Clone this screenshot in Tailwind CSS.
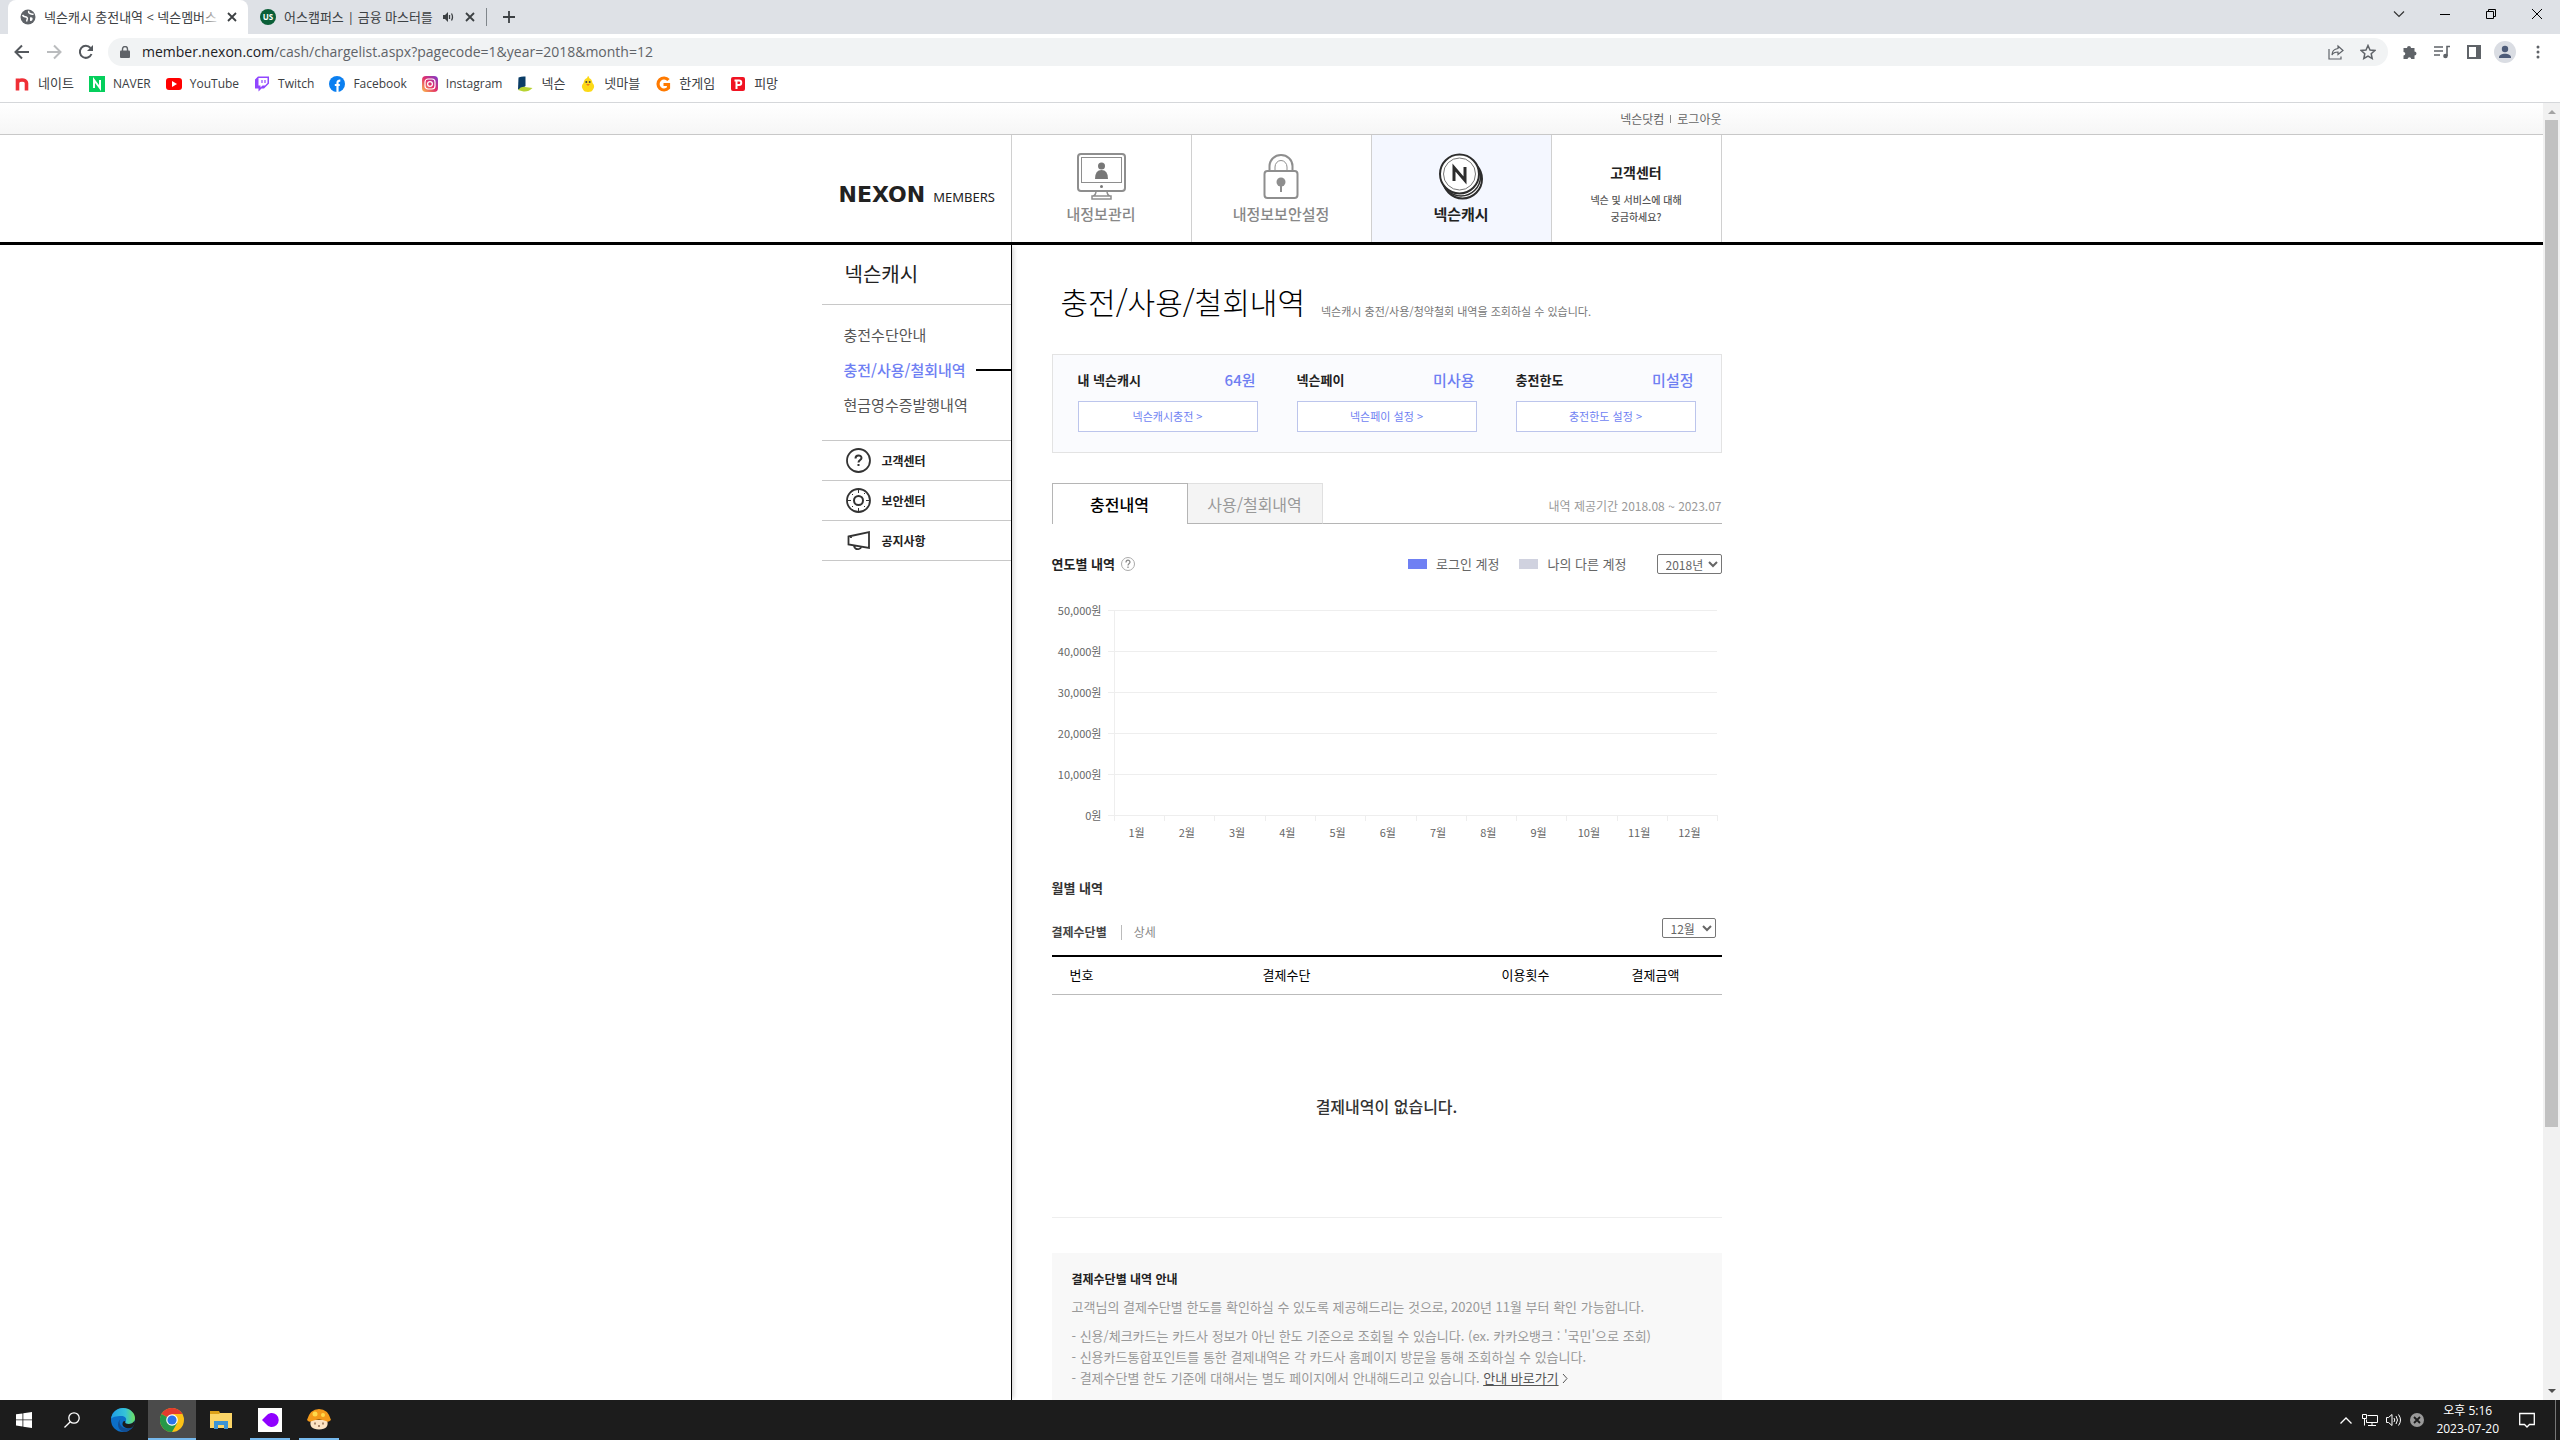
<!DOCTYPE html>
<html lang="ko">
<head>
<meta charset="utf-8">
<title>넥슨캐시 충전내역 &lt; 넥슨멤버스</title>
<script src="https://cdn.jsdelivr.net/npm/@tailwindcss/browser@4"></script>
</head>
<body class="flex h-screen flex-col overflow-hidden bg-white font-['Noto_Sans_CJK_KR',sans-serif] text-[13px] leading-[20px] text-[#333]">

<!-- Browser chrome -->
<div class="shrink-0 border-b border-[#d5d7da] font-['Open_Sans','Noto_Sans_CJK_KR',sans-serif] text-[#3c4043]">
  <div class="flex h-[34px] items-stretch bg-[#dee1e6]">
    <div class="ml-2 flex w-[240px] items-center rounded-t-lg bg-white pr-2 pl-3">
      <svg class="size-4 shrink-0" viewBox="0 0 16 16"><circle cx="8" cy="8" r="7.5" fill="#5f6368"/><path d="M2.500 6c1.500 2.500 3 1 4.500 2.500s-1 2 0 4M9 2c-1 1.500 0 2 1 2.500s2 1 3.500.5" fill="none" stroke="#fff" stroke-width="1.500"/><path d="M10 8.500c2-.5 3 .5 2.500 2s-2 2-2.500 1z" fill="#fff"/></svg>
      <div class="relative ml-2 min-w-0 flex-1 whitespace-nowrap">넥슨캐시 충전내역 &lt; 넥슨멤버스<span class="absolute inset-y-0 right-0 w-5 bg-linear-to-r from-transparent to-white"></span></div>
      <button class="ml-1 flex size-4 shrink-0 items-center justify-center" aria-label="탭 닫기"><svg class="size-[10px]" viewBox="0 0 10 10"><path d="M1 1l8 8M9 1l-8 8" stroke="#3c4043" stroke-width="1.800"/></svg></button>
    </div>
    <div class="my-2 flex w-[239px] items-center border-r border-[#80868b] pr-2 pl-3">
      <span class="flex size-4 shrink-0 items-center justify-center rounded-full bg-[#0b5f38] text-[8px] font-bold text-white">US</span>
      <div class="ml-2 min-w-0 flex-1 whitespace-nowrap">어스캠퍼스 | 금융 마스터를</div>
      <svg class="ml-3 size-3 shrink-0" viewBox="0 0 12 12"><path d="M1 4h2l3-3v10L3 8H1z" fill="#3c4043"/><path d="M7.500 4v4M9.500 2.500q2 3.500 0 7" stroke="#3c4043" fill="none" stroke-width="1.300"/></svg>
      <button class="ml-2 flex size-4 shrink-0 items-center justify-center" aria-label="탭 닫기"><svg class="size-[10px]" viewBox="0 0 10 10"><path d="M1 1l8 8M9 1l-8 8" stroke="#3c4043" stroke-width="1.800"/></svg></button>
    </div>
    <button class="ml-4 flex items-center" aria-label="새 탭"><svg class="size-3" viewBox="0 0 12 12"><path d="M6 0v12M0 6h12" stroke="#3c4043" stroke-width="1.800"/></svg></button>
    <div class="ml-auto flex items-center pb-1.5 text-black">
      <button class="flex w-[46px] justify-center" aria-label="탭 검색"><svg class="h-[7px] w-3" viewBox="0 0 12 7"><path d="M1 .5l5 5 5-5" stroke="#333" stroke-width="1.200" fill="none"/></svg></button>
      <button class="flex w-[46px] justify-center" aria-label="최소화"><svg class="size-[10px]" viewBox="0 0 10 10"><path d="M0 5.500h10" stroke="#000"/></svg></button>
      <button class="flex w-[46px] justify-center" aria-label="이전 크기로"><svg class="size-[10px]" viewBox="0 0 10 10"><path d="M.5 2.500h7v7h-7zM2.500 2.500v-2h7v7h-2" stroke="#000" fill="none"/></svg></button>
      <button class="flex w-[46px] justify-center" aria-label="닫기"><svg class="size-[10px]" viewBox="0 0 10 10"><path d="M0 0l10 10M10 0L0 10" stroke="#000"/></svg></button>
    </div>
  </div>

  <div class="flex h-9 items-center bg-white pr-5 pl-3.5">
    <button aria-label="뒤로"><svg class="size-4" viewBox="0 0 16 16"><path d="M15 8H2M8 1.500L1.500 8 8 14.500" stroke="#54585d" stroke-width="2" fill="none"/></svg></button>
    <button class="ml-4" aria-label="앞으로"><svg class="size-4" viewBox="0 0 16 16"><path d="M1 8h13M8 1.500L14.500 8 8 14.500" stroke="#babcbe" stroke-width="2" fill="none"/></svg></button>
    <button class="ml-4" aria-label="새로고침"><svg class="size-4" viewBox="0 0 16 16"><path d="M13.500 10A6 6 0 1 1 12.500 4" stroke="#54585d" stroke-width="2" fill="none"/><path d="M15 1v6H9z" fill="#54585d"/></svg></button>
    <div class="ml-3.5 flex h-7 flex-1 items-center rounded-full bg-[#f1f3f4] pr-3 pl-3">
      <svg class="h-3 w-[10px]" viewBox="0 0 10 12"><rect y="4.500" width="10" height="7.500" rx="1" fill="#5f6368"/><path d="M2.500 5V3a2.500 2.500 0 0 1 5 0v2" stroke="#5f6368" stroke-width="1.400" fill="none"/></svg>
      <div class="ml-3 text-sm text-[#5f6368]"><span class="text-[#202124]">member.nexon.com</span>/cash/chargelist.aspx?pagecode=1&amp;year=2018&amp;month=12</div>
      <button class="ml-auto" aria-label="공유"><svg class="size-4" viewBox="0 0 16 16"><path d="M1 5v10h12v-2.500M10 2l5 4.500-5 4V8C7 8 5 9 4 11c0-4 2.500-6 6-6.500z" stroke="#5f6368" stroke-width="1.200" fill="none"/></svg></button>
      <button class="ml-4" aria-label="북마크"><svg class="size-4" viewBox="0 0 16 16"><path d="M8 1.500l2 4.500 4.800.5-3.600 3.200 1 4.800L8 12l-4.200 2.500 1-4.800L1.200 6.500 6 6z" stroke="#5f6368" stroke-width="1.500" fill="none"/></svg></button>
    </div>
    <button class="ml-3.5" aria-label="확장 프로그램"><svg class="size-4" viewBox="0 0 16 16"><path d="M1.500 4H5a2 2 0 1 1 4 0h3.500v3.500a2 2 0 1 1 0 4V15H9.200a1.800 1.800 0 0 0-3.600 0H1.500v-3.500a1.800 1.800 0 0 0 0-3.600z" fill="#5f6368"/></svg></button>
    <button class="ml-4" aria-label="미디어"><svg class="size-4" viewBox="0 0 16 16"><path d="M0 3h9M0 7h9M0 11h6M13 12V2.500h3" stroke="#5f6368" stroke-width="1.600" fill="none"/><circle cx="11.500" cy="12" r="2.300" fill="#5f6368"/></svg></button>
    <button class="ml-4" aria-label="사이드 패널"><svg class="size-4" viewBox="0 0 16 16"><rect x="2" y="2" width="12" height="12" fill="none" stroke="#5f6368" stroke-width="2"/><path d="M10 2h4v12h-4z" fill="#5f6368"/></svg></button>
    <button class="ml-3" aria-label="프로필"><svg class="size-[22px]" viewBox="0 0 22 22"><circle cx="11" cy="11" r="11" fill="#dadde3"/><circle cx="11" cy="8" r="3.200" fill="#4d5b78"/><path d="M5 16.500c0-5 12-5 12 0v.5H5z" fill="#4d5b78"/></svg></button>
    <button class="ml-5" aria-label="메뉴"><svg class="h-4 w-1" viewBox="0 0 4 16"><circle cx="2" cy="3" r="1.500" fill="#5f6368"/><circle cx="2" cy="8" r="1.500" fill="#5f6368"/><circle cx="2" cy="13" r="1.500" fill="#5f6368"/></svg></button>
  </div>

  <nav class="flex h-8 items-center gap-[15px] bg-white pb-1 pl-3.5 text-xs">
    <a href="#" class="flex items-center gap-2 text-[13px]"><svg class="size-4" viewBox="0 0 16 16"><path d="M3.500 14.500V2.500M3.500 7c0-4 9-4 9 0v7.500" stroke="#ef2f36" stroke-width="3.600" fill="none"/></svg>네이트</a>
    <a href="#" class="flex items-center gap-2"><svg class="size-4" viewBox="0 0 16 16"><rect width="16" height="16" fill="#05cf5c"/><path d="M5 12V4l6 8V4" stroke="#fff" stroke-width="2" fill="none"/></svg>NAVER</a>
    <a href="#" class="flex items-center gap-2"><svg class="size-4" viewBox="0 0 16 16"><rect y="2" width="16" height="12" rx="3" fill="#f00"/><path d="M6 5l5 3-5 3z" fill="#fff"/></svg>YouTube</a>
    <a href="#" class="flex items-center gap-2"><svg class="size-4" viewBox="0 0 16 16"><path d="M4 .5L1 3.500v9h3.500v3L7.500 12.500H10l5-5v-7z" fill="#9146ff"/><path d="M4.500 2h9v5L11 9.500H8.500l-2 2v-2h-2z" fill="#fff"/><path d="M8 4v3M11 4v3" stroke="#9146ff" stroke-width="1.200"/></svg>Twitch</a>
    <a href="#" class="flex items-center gap-2"><svg class="size-4" viewBox="0 0 16 16"><circle cx="8" cy="8" r="8" fill="#0b7ff0"/><path d="M8.500 16V7q0-2.500 2.800-2.300M5.800 9h5" stroke="#fff" stroke-width="2.200" fill="none"/></svg>Facebook</a>
    <a href="#" class="flex items-center gap-2"><svg class="size-4" viewBox="0 0 16 16"><defs><linearGradient id="ig" x1="0" y1="1" x2="1" y2="0"><stop stop-color="#fdc04d"/><stop offset=".5" stop-color="#e1306c"/><stop offset="1" stop-color="#7a3bd0"/></linearGradient></defs><rect width="16" height="16" rx="4" fill="url(#ig)"/><rect x="3" y="3" width="10" height="10" rx="3" stroke="#fff" stroke-width="1.200" fill="none"/><circle cx="8" cy="8" r="2.400" stroke="#fff" stroke-width="1.200" fill="none"/></svg>Instagram</a>
    <a href="#" class="flex items-center gap-2 text-[13px]"><svg class="size-4" viewBox="0 0 16 16"><path d="M1.500 1.500Q5 0 8.500.5V10l-5 3.500H1z" fill="#0a3c66"/><path d="M1 14q3-4 7-3l7.500 1q-4 4-9 3.500z" fill="#b7d331"/></svg>넥슨</a>
    <a href="#" class="flex items-center gap-2 text-[13px]"><svg class="size-4" viewBox="0 0 16 16"><path d="M8 0q2 1 1 2 3 1 3.500 5 3 3 .5 6.500-1 2.500-5 2.500t-5-2.500Q.5 10 3.500 7 4 3 7 2z" fill="#fcd916"/><circle cx="6.300" cy="6" r="1" fill="#444"/><circle cx="9.700" cy="6" r="1" fill="#444"/><path d="M6 8h4l-2 2z" fill="#ee7a1b"/></svg>넷마블</a>
    <a href="#" class="flex items-center gap-2 text-[13px]"><svg class="size-4" viewBox="0 0 16 16"><path d="M13.500 4A6 6 0 1 0 13.500 12V8.500H8.500" stroke="#ff7a00" stroke-width="3.200" fill="none"/></svg>한게임</a>
    <a href="#" class="flex items-center gap-2 text-[13px]"><svg class="size-4" viewBox="0 0 16 16"><rect x="1" y="1" width="14" height="14" rx="2" fill="#f01423"/><path d="M6.500 13V4.500M4.500 4.500H9a2 2 0 0 1 0 4.500H6.500" stroke="#fff" stroke-width="2" fill="none"/></svg>피망</a>
  </nav>
</div>

<!-- Page viewport -->
<div class="flex min-h-0 flex-1">
  <div class="flex min-w-0 flex-1 flex-col overflow-hidden">
    <div class="h-8 shrink-0 border-b border-[#c8c8c8] bg-linear-to-b from-white to-[#f6f6f6]">
      <div class="mx-auto flex w-[900px] items-center justify-end gap-1.5 pt-1.5 text-[12px] text-[#666]">
        <a href="#">넥슨닷컴</a><span class="h-2 w-px bg-[#888]"></span><a href="#">로그아웃</a>
      </div>
    </div>

    <header class="shrink-0 border-b-3 border-black">
      <div class="mx-auto flex h-[107px] w-[900px]">
        <a href="#" class="flex w-[189px] items-baseline gap-2 pt-[49px] pl-[17px] leading-[22px] text-[#222]"><span class="font-['DejaVu_Sans',sans-serif] text-[22px] font-bold">NEXON</span><span class="font-['Noto_Sans',sans-serif] text-[13px]">MEMBERS</span></a>
        <nav class="flex flex-1 text-center text-[15px] font-medium text-[#888]">
          <a href="#" class="flex w-[180px] flex-col items-center border-l border-[#d0d0d0] pt-[18px]">
            <svg class="h-[47px] w-[49px]" viewBox="0 0 49 47" fill="none" stroke="#8e8e8e"><rect x="1" y="1" width="47" height="37" rx="3" stroke-width="2"/><rect x="4.500" y="4.500" width="40" height="25"/><circle cx="24.500" cy="13" r="3.500" fill="#777" stroke="none"/><path d="M18 26q0-9 6.500-9t6.500 9z" fill="#777" stroke="none"/><circle cx="24.500" cy="33.500" r="1.500" fill="#777" stroke="none"/><path d="M19 38q0 4-3 5M30 38q0 4 3 5M15 43h19v3H15z" stroke-width="1.500"/></svg>
            <span class="mt-1">내정보관리</span></a>
          <a href="#" class="flex w-[180px] flex-col items-center border-l border-[#d0d0d0] pt-[18px]">
            <svg class="h-[47px] w-[36px]" viewBox="0 0 36 47" fill="none" stroke="#8e8e8e"><rect x="1.500" y="18" width="33" height="27" rx="3" stroke-width="2"/><path d="M6.500 18v-5a11.500 11 0 0 1 23 0v5" stroke-width="2"/><path d="M12 18v-4a6 6.500 0 0 1 12 0v4"/><circle cx="18" cy="29" r="4.500" fill="#8e8e8e" stroke="none"/><path d="M18 30v9" stroke-width="2"/></svg>
            <span class="mt-1">내정보보안설정</span></a>
          <a href="#" class="flex w-[180px] flex-col items-center border-l border-[#d0d0d0] bg-[#f4f7ff] pt-[18px] font-bold text-[#222]">
            <svg class="h-[47px] w-[46px]" viewBox="0 0 46 47" fill="none" stroke="#2d2d2d"><circle cx="24.500" cy="26" r="19.500" fill="#fff" stroke-width="2"/><circle cx="23" cy="23.500" r="19.500" fill="#fff" stroke-width="1.500"/><circle cx="21.500" cy="21" r="19.500" fill="#fff" stroke-width="2"/><circle cx="21.500" cy="21" r="16" stroke="#777"/><path d="M16 28V14.500l11 13V14" stroke-width="3"/></svg>
            <span class="mt-1">넥슨캐시</span></a>
          <a href="#" class="flex flex-1 flex-col items-center border-x border-[#d0d0d0] pt-[27px]"><strong class="text-[14px] text-[#222]">고객센터</strong><span class="mt-[9px] text-[10px] leading-[17px] text-[#555]">넥슨 및 서비스에 대해<br>궁금하세요?</span></a>
        </nav>
      </div>
    </header>

    <div class="mx-auto flex min-h-0 w-[900px] flex-1">
      <aside class="w-[190px] shrink-0 border-r border-black shadow-[4px_0_4px_-2px_rgba(0,0,0,0.15)]">
        <h2 class="border-b border-[#c8c8c8] pt-[14px] pb-[15px] pl-[23px] text-xl leading-[30px] text-[#222]">넥슨캐시</h2>
        <ul class="pt-3 pb-[18px] pl-[22px] text-[15px] leading-[35px] text-[#555]">
          <li><a href="#">충전수단안내</a></li>
          <li class="flex items-center gap-2.5"><a href="#" class="font-medium text-[#6f80f3]">충전/사용/철회내역</a><span class="h-0.5 flex-1 bg-black"></span></li>
          <li><a href="#">현금영수증발행내역</a></li>
        </ul>
        <ul class="border-t border-[#c8c8c8] text-xs font-bold text-[#222]">
          <li class="border-b border-[#c8c8c8]"><a href="#" class="flex h-[39px] items-center gap-[11px] pl-6"><svg class="size-[25px]" viewBox="0 0 25 25" fill="none" stroke="#333" stroke-width="1.800"><circle cx="12.500" cy="12.500" r="11.500"/><path d="M9.500 10.500c0-4 6-4 6-.5 0 2-3 2-3 4.500M12.500 16v2" stroke-width="2"/></svg>고객센터</a></li>
          <li class="border-b border-[#c8c8c8]"><a href="#" class="flex h-[39px] items-center gap-[11px] pl-6"><svg class="size-[25px]" viewBox="0 0 25 25" fill="none" stroke="#333" stroke-width="1.800"><circle cx="12.500" cy="12.500" r="11.500"/><circle cx="12.500" cy="12.500" r="4.500" stroke-width="2"/><path d="M12.500 1v4M12.500 20v4M1 12.500h4M20 12.500h4M6 6l1 1M18 6l1-1M6 19l1-1M18 18l1 1" stroke-width="1"/></svg>보안센터</a></li>
          <li class="border-b border-[#c8c8c8]"><a href="#" class="flex h-[39px] items-center gap-[11px] pl-6"><svg class="size-[25px]" viewBox="0 0 25 25" fill="none" stroke="#333" stroke-width="1.800"><path d="M2.500 8.500L23 4v16L2.500 16.500zM8 18q1 4 5 3 2-.5 2-2M5 8v2"/></svg>공지사항</a></li>
        </ul>
      </aside>

      <main class="flex-1 pl-10">
        <div class="flex items-end pt-[34px] pl-[9px]">
          <h1 class="text-[30px] leading-[44px] font-light text-black">충전/사용/철회내역</h1>
          <p class="mb-0.5 ml-4 text-[11px] text-[#777]">넥슨캐시 충전/사용/청약철회 내역을 조회하실 수 있습니다.</p>
        </div>

        <section class="mt-[31px] grid h-[99px] grid-cols-3 gap-[39px] border border-[#e3e3e3] bg-[#fafbfe] px-[25px] pt-[15px]">
          <div>
            <div class="flex justify-between"><strong class="text-[#222]">내 넥슨캐시</strong><span class="pr-0.5 text-[15px] font-medium text-[#6f7ff2]">64원</span></div>
            <button class="mt-[11px] h-[31px] w-full border border-[#bcc5ec] bg-white pb-0.5 text-[11px] text-[#6f7ff2]">넥슨캐시충전 &gt;</button>
          </div>
          <div>
            <div class="flex justify-between"><strong class="text-[#222]">넥슨페이</strong><span class="pr-0.5 text-[15px] font-medium text-[#6f7ff2]">미사용</span></div>
            <button class="mt-[11px] h-[31px] w-full border border-[#bcc5ec] bg-white pb-0.5 text-[11px] text-[#6f7ff2]">넥슨페이 설정 &gt;</button>
          </div>
          <div>
            <div class="flex justify-between"><strong class="text-[#222]">충전한도</strong><span class="pr-0.5 text-[15px] font-medium text-[#6f7ff2]">미설정</span></div>
            <button class="mt-[11px] h-[31px] w-full border border-[#bcc5ec] bg-white pb-0.5 text-[11px] text-[#6f7ff2]">충전한도 설정 &gt;</button>
          </div>
        </section>

        <div class="mt-[30px] flex h-[41px]">
          <button class="w-[136px] border border-b-0 border-[#b5b5b5] text-base font-medium text-black">충전내역</button>
          <button class="w-[135px] border-t border-r border-b border-t-[#e0e0e0] border-r-[#e0e0e0] border-b-[#b5b5b5] bg-[#f4f4f4] text-base text-[#999]">사용/철회내역</button>
          <p class="flex-1 border-b border-[#b5b5b5] pt-[13px] text-right text-xs leading-[20px] text-[#999]">내역 제공기간 2018.08 ~ 2023.07</p>
        </div>

        <div class="mt-[30px] flex h-5 items-center text-[#666]">
          <h3 class="font-bold text-[#222]">연도별 내역</h3>
          <svg class="ml-1.5 size-[14px]" viewBox="0 0 14 14" fill="none" stroke="#aaa"><circle cx="7" cy="7" r="6.500"/><path d="M5 5.500c0-3 4-3 4-.3C9 6.500 7 6.500 7 8.500M7 9.500v1.500" stroke="#888" stroke-width="1.200"/></svg>
          <span class="ml-auto h-[10px] w-[19px] bg-[#6f80f3]"></span><span class="ml-[9px]">로그인 계정</span>
          <span class="ml-5 h-[10px] w-[19px] bg-[#d0d2df]"></span><span class="ml-[9px]">나의 다른 계정</span>
          <select aria-label="연도" class="ml-[30px] h-5 w-[65px] rounded-[2px] border border-[#767676] bg-white pl-1 text-xs leading-[16px]"><option>2018년</option></select>
        </div>

        <div class="mt-[26px] flex">
          <div class="flex w-[50px] flex-col gap-[21px] text-right text-[11px] text-[#666]"><span>50,000원</span><span>40,000원</span><span>30,000원</span><span>20,000원</span><span>10,000원</span><span>0원</span></div>
          <div class="mt-[10px] ml-1.5 w-[610px]">
            <svg class="block h-[212px] w-full" viewBox="0 0 610 212" stroke="#eee" shape-rendering="crispEdges"><path d="M0 .5h609M0 41.500h609M0 82.500h609M0 123.500h609M0 164.500h609M0 205.500h610"/><path d="M6.500 0v211M56.500 206v5M106.500 206v5M157.500 206v5M207.500 206v5M257.500 206v5M308.500 206v5M358.500 206v5M408.500 206v5M458.500 206v5M509.500 206v5M559.500 206v5M609.500 206v5"/></svg>
            <div class="grid grid-cols-12 pr-[3px] pl-1 text-center text-[11px] text-[#666]"><span>1월</span><span>2월</span><span>3월</span><span>4월</span><span>5월</span><span>6월</span><span>7월</span><span>8월</span><span>9월</span><span>10월</span><span>11월</span><span>12월</span></div>
          </div>
        </div>

        <h3 class="mt-9 font-bold text-[#333]">월별 내역</h3>
        <div class="mt-5 flex h-[37px] items-start text-xs leading-[20px]">
          <a href="#" class="mt-1 font-bold text-[#444]">결제수단별</a><span class="mt-[7px] ml-3.5 h-[15px] w-px bg-[#bbb]"></span><a href="#" class="mt-1 ml-3 text-[#888]">상세</a>
          <select aria-label="월" class="mr-1.5 ml-auto h-5 w-[54px] rounded-[2px] border border-[#767676] bg-white pl-1 text-xs leading-[16px] text-[#666]"><option>12월</option></select>
        </div>
        <table class="w-full table-fixed text-center">
          <thead class="border-t-2 border-b border-t-black border-b-[#bbb] text-[13px] text-black"><tr class="h-[38px]"><th class="w-[60px] font-normal">번호</th><th class="font-normal">결제수단</th><th class="w-[128px] font-normal">이용횟수</th><th class="w-[132px] font-normal">결제금액</th></tr></thead>
          <tbody><tr class="h-[223px] border-b border-[#eee]"><td colspan="4" class="text-base font-medium text-[#333]">결제내역이 없습니다.</td></tr></tbody>
        </table>

        <section class="mt-[35px] bg-[#f8f8f8] px-5 pt-4 pb-10 text-[#999]">
          <h4 class="text-xs leading-[20px] font-bold text-[#222]">결제수단별 내역 안내</h4>
          <p class="mt-2">고객님의 결제수단별 한도를 확인하실 수 있도록 제공해드리는 것으로, 2020년 11월 부터 확인 가능합니다.</p>
          <ul class="mt-2 leading-[21px]">
            <li>- 신용/체크카드는 카드사 정보가 아닌 한도 기준으로 조회될 수 있습니다. (ex. 카카오뱅크 : '국민'으로 조회)</li>
            <li>- 신용카드통합포인트를 통한 결제내역은 각 카드사 홈페이지 방문을 통해 조회하실 수 있습니다.</li>
            <li>- 결제수단별 한도 기준에 대해서는 별도 페이지에서 안내해드리고 있습니다. <a href="#" class="text-[#555]"><span class="underline underline-offset-2">안내 바로가기</span> <svg class="inline h-[9px] w-[6px]" viewBox="0 0 6 9"><path d="M1 0l4 4.500L1 9" stroke="#555" fill="none"/></svg></a></li>
          </ul>
        </section>
      </main>
    </div>
  </div>

  <!-- Scrollbar -->
  <div class="flex w-[17px] shrink-0 flex-col items-center bg-[#f1f1f1]">
    <svg class="h-[17px] w-[17px] shrink-0" viewBox="0 0 17 17"><path d="M5 11h8L9 7z" fill="#a3a3a3"/></svg>
    <div class="w-[13px] flex-[1007] bg-[#c1c1c1]"></div>
    <div class="flex-[256]"></div>
    <svg class="h-[17px] w-[17px] shrink-0" viewBox="0 0 17 17"><path d="M5 6h8l-4 4z" fill="#505050"/></svg>
  </div>
</div>

<!-- Taskbar -->
<footer class="flex h-10 shrink-0 items-stretch bg-[#1c1c1c] text-xs text-white">
  <button class="flex w-12 items-center justify-center" aria-label="시작"><svg class="size-4" viewBox="0 0 16 16" fill="#fff"><path d="M0 2.300l6.500-.9v6.100H0zM7.300 1.300L16 0v7.500H7.300zM0 8.300h6.500v6.200L0 13.600zM7.300 8.300H16V16l-8.700-1.300z"/></svg></button>
  <button class="flex w-12 items-center justify-center" aria-label="검색"><svg class="size-4" viewBox="0 0 16 16" stroke="#fff" stroke-width="1.300" fill="none"><circle cx="10" cy="6" r="5.200"/><path d="M6.300 9.700L.5 15.500"/></svg></button>
  <button class="ml-0.5 flex w-[50px] items-center justify-center" aria-label="Edge"><svg class="size-6" viewBox="0 0 24 24"><defs><linearGradient id="eg" x1="0" x2="1"><stop stop-color="#1f9de6"/><stop offset=".6" stop-color="#35c3d8"/><stop offset="1" stop-color="#6fe05c"/></linearGradient></defs><circle cx="12" cy="12" r="12" fill="#0c6fc8"/><path d="M0 11C1 4 6 0 12 0c7 0 12 5 12 10 0 4-3 6-6.500 6-3 0-4-1.500-3-2.500 2-3-.5-5.500-4-5.500C5 8 1 9 0 11z" fill="url(#eg)"/><path d="M9.500 11c-3 5 2 10 7 9.500 3 0 5-2 5.500-2.500-2 4-6 6-9 6-6-1-8-9-3.500-13z" fill="#124e94"/><path d="M14.500 13.500c-1 1 0 2.500 3 2.500 2.500 0 5-1 6-3.500l.5 3.500-3 3.500c-4 2-10 0-9.500-4 .2-1.500 1.500-3.500 3-2z" fill="#1c1c1c"/></svg></button>
  <button class="flex w-12 items-center justify-center border-b-2 border-[#76b9ed] bg-[#4b4b4b] pt-0.5" aria-label="Chrome"><svg class="size-6" viewBox="0 0 24 24"><circle cx="12" cy="12" r="12" fill="#fbc116"/><path d="M12 12L1.600 6A12 12 0 0 1 22.400 6z" fill="#e33b2e"/><path d="M12 12L1.600 6A12 12 0 0 0 12 24l5.200-9z" fill="#269848"/><path d="M12 6h10.400l-5.200 9z" fill="#fbc116"/><circle cx="12" cy="12" r="5.800" fill="#fff"/><circle cx="12" cy="12" r="4.600" fill="#2b74e8"/></svg></button>
  <button class="flex w-[50px] items-center justify-center" aria-label="파일 탐색기"><svg class="h-[18px] w-[22px]" viewBox="0 0 22 18"><path d="M0 0h9l1 2h12v15H0z" fill="#dca11a"/><path d="M0 3h9l1-1h12v15H0z" fill="#fbd567"/><path d="M4 18v-8h14v8h-4v-4H8v4z" fill="#3c94d5"/></svg></button>
  <button class="mx-1 flex w-10 items-center justify-center border-b-2 border-[#76b9ed] pt-0.5" aria-label="앱"><svg class="size-6" viewBox="0 0 24 24"><path d="M0 0h24v24H0z" fill="#fff"/><path d="M4 12l4-4a7 7 0 1 1 0 8z" fill="#8f00ff"/></svg></button>
  <button class="mx-[5px] flex w-10 items-center justify-center border-b-2 border-[#76b9ed] pt-0.5" aria-label="메이플스토리"><svg class="size-6" viewBox="0 0 24 24"><path d="M4 12h16q3 9-8 9.500Q1 21 4 12z" fill="#fbe3c4"/><path d="M0 12Q3 1 12 1t12 11q-3 3-5 1-7-3-14 0-3 2-5-1z" fill="#f49a1a"/><circle cx="8" cy="6" r="2.500" fill="#ffd94a"/><circle cx="16" cy="7" r="2" fill="#ffd94a"/><path d="M8 14.500v2M16 14.500v2M11 18h2" stroke="#5a2c12"/></svg></button>
  <div class="ml-auto flex items-center">
    <svg class="h-[7px] w-3" viewBox="0 0 12 7"><path d="M.5 6.500L6 1l5.500 5.500" stroke="#fff" stroke-width="1.300" fill="none"/></svg>
    <svg class="ml-[10px] size-4" viewBox="0 0 16 16" fill="none" stroke="#fff"><path d="M5.500 3.500h10v7h-11v-3M10 10.500v3M6 13.500h8M.5 2.500h4v4h-4zM2.500 6.500v7"/></svg>
    <svg class="ml-2 size-4" viewBox="0 0 16 16" fill="none" stroke="#fff"><path d="M.5 5.500h2l3.500-3v11l-3.500-3h-2zM8 6q1.500 2 0 4M10 4q3 4 0 8M12.500 2.500q4 5.500 0 11"/></svg>
    <svg class="ml-2 size-[14px]" viewBox="0 0 14 14"><circle cx="7" cy="7" r="7" fill="#999"/><path d="M4 4l6 6M10 4l-6 6" stroke="#1c1c1c" stroke-width="1.800"/></svg>
    <div class="ml-3 text-center font-['Open_Sans','Noto_Sans_CJK_KR',sans-serif] leading-[18px]">오후 5:16<br>2023-07-20</div>
    <svg class="ml-5 size-4" viewBox="0 0 16 16" fill="none" stroke="#fff" stroke-width="1.300"><path d="M.7 1.500h14.600v11H10.500l-2.500 2.500-2.500-2.500H.7z"/></svg>
    <span class="ml-5 h-10 w-px bg-[#777]"></span><span class="w-1"></span>
  </div>
</footer>
</body>
</html>
